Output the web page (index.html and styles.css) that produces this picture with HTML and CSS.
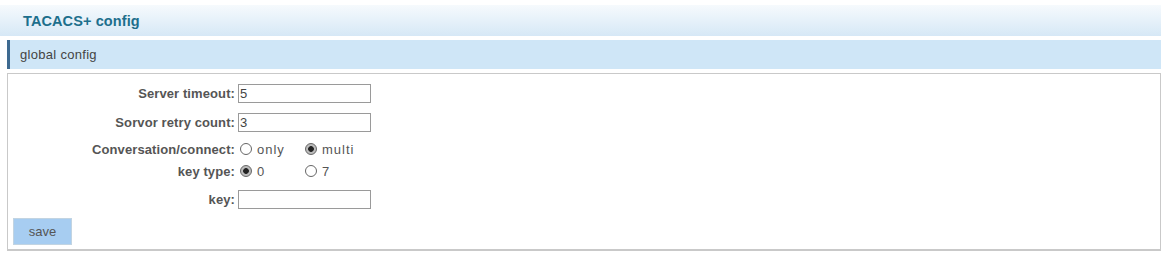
FILE: index.html
```html
<!DOCTYPE html>
<html>
<head>
<meta charset="utf-8">
<link rel="stylesheet" href="styles.css">
</head>
<body>
<div class="page">
  <div class="header"><span class="title">TACACS+ config</span></div>
  <div class="section"><span>global config</span></div>
  <div class="panel">
    <div class="form">
      <label class="lbl">Server timeout:</label>
      <div class="ctl"><input class="txt" type="text" value="5"></div>
      <label class="lbl">Sorvor retry count:</label>
      <div class="ctl"><input class="txt" type="text" value="3"></div>
      <label class="lbl">Conversation/connect:</label>
      <div class="ctl radios">
        <span class="opt"><input class="rad" type="radio" name="conv"> only</span>
        <span class="opt"><input class="rad" type="radio" name="conv" checked> multi</span>
      </div>
      <label class="lbl">key type:</label>
      <div class="ctl radios">
        <span class="opt"><input class="rad" type="radio" name="kt" checked> 0</span>
        <span class="opt"><input class="rad" type="radio" name="kt"> 7</span>
      </div>
      <label class="lbl">key:</label>
      <div class="ctl"><input class="txt" type="text" value=""></div>
    </div>
    <button class="save">save</button>
  </div>
</div>
</body>
</html>
```

FILE: styles.css
```css
* { box-sizing: border-box; }
html, body { margin: 0; padding: 0; background: #fff; }
body { font-family: "Liberation Sans", Arial, sans-serif; font-size: 12px; color: #444; }
.page { padding: 5px 3px 0 7px; width: 1164px; }
.header {
  height: 31px;
  background: linear-gradient(#f6fafd, #d6e8f6);
  display: flex; align-items: center;
  margin-left: -7px; padding-left: 23px;
}
.title { color: #1d6f8c; font-weight: bold; font-size: 14.5px; letter-spacing: 0.1px; }
.section {
  margin-top: 4px;
  height: 29px;
  background: #cfe6f7;
  border-left: 3px solid #3e6a90;
  display: flex; align-items: center;
  padding-left: 10px;
  font-size: 13px; color: #444; letter-spacing: 0.3px;
}
.panel {
  margin-top: 4px;
  border: 1px solid #c9c9c9;
  border-bottom-width: 2px;
  height: 178px;
  padding: 4px 0 0 5px;
}
.form {
  display: grid;
  grid-template-columns: 222px auto;
  grid-template-rows: 30px 28px 26px 18px 38px;
  column-gap: 3px;
  align-items: center;
}
.lbl { text-align: right; font-weight: bold; color: #555; font-size: 13px; letter-spacing: 0.1px; }
.ctl { display: flex; align-items: center; }
.txt {
  width: 133px; height: 19px;
  border: 1px solid #9a9a9a;
  padding: 0 1px;
  font-family: "Liberation Sans", Arial, sans-serif;
  font-size: 13px; color: #444;
  margin: 0;
}
.opt { width: 65px; display: flex; align-items: center; color: #555; font-size: 13px; letter-spacing: 1px; }
.rad {
  appearance: none; -webkit-appearance: none;
  margin: 0 5px 0 2px; width: 12px; height: 12px;
  border: 1px solid #666; border-radius: 50%;
  background: #fff;
}
.rad:checked { background: radial-gradient(circle, #222 0 2.5px, #bbb 3.2px 100%); }
.save {
  width: 59px; height: 27px;
  background: #a7cdf1;
  border: 1px solid #c2d4e2;
  color: #555;
  font-family: "Liberation Sans", Arial, sans-serif;
  font-size: 13px;
  padding: 0;
}
```
